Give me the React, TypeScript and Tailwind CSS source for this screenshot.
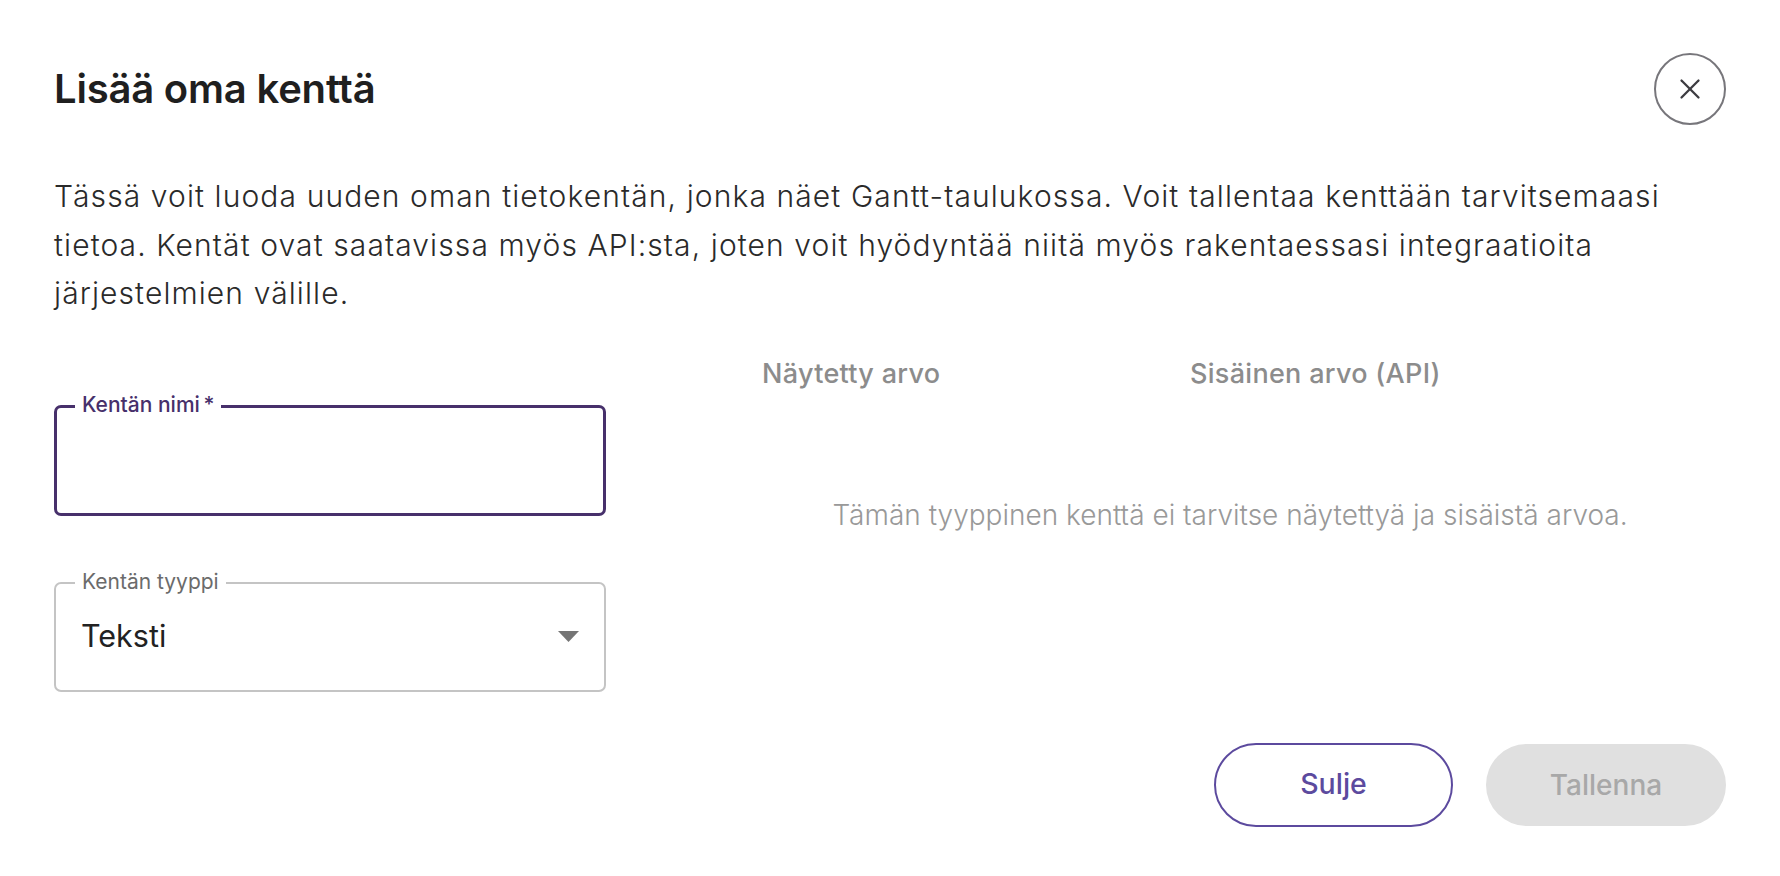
import { X } from "lucide-react";

const FONT = "font-['Inter','Roboto','Liberation_Sans',sans-serif]";

function OutlinedField({
  label,
  focused,
  children,
}: {
  label: string;
  focused?: boolean;
  children?: React.ReactNode;
}) {
  return (
    <div
      className={
        focused
          ? "relative h-[111px] rounded-[7px] border-[3px] border-[#47306b]"
          : "relative h-[110px] rounded-[7px] border-2 border-[#c4c4c4]"
      }
    >
      <span
        className={
          focused
            ? "absolute -top-[16px] left-[18px] bg-white px-[7px] text-[21px] leading-[26px] font-medium text-[#47306b]"
            : "absolute -top-[15px] left-[19px] bg-white px-[7px] text-[21px] leading-[26px] text-[#6b6b6b]"
        }
      >
        {label}
      </span>
      {children}
    </div>
  );
}

export default function App() {
  return (
    <div className={`${FONT} min-h-screen bg-white px-[54px] pt-[53px] text-[#222]`}>
      <div className="flex items-center justify-between">
        <h1 className="text-[40px] font-semibold leading-[48px] tracking-[-0.2px] text-[#1f1f1f]">
          Lisää oma kenttä
        </h1>
        <button className="flex h-[72px] w-[72px] items-center justify-center rounded-full border-2 border-[#77767b] text-[#3c3b40]">
          <X size={34} strokeWidth={1.6} />
        </button>
      </div>

      <p className="mt-[47px] text-[30px] font-light leading-[48.5px] tracking-[1.1px] text-[#2a2a2a]">
        Tässä voit luoda uuden oman tietokentän, jonka näet Gantt-taulukossa. Voit tallentaa kenttään tarvitsemaasi
        tietoa. Kentät ovat saatavissa myös API:sta, joten voit hyödyntää niitä myös rakentaessasi integraatioita
        järjestelmien välille.
      </p>

      <div className="grid grid-cols-[552px_1fr] gap-x-[128px]">
        <div className="pt-[87px]">
          <OutlinedField label={"Kentän nimi\u2009*"} focused />
          <div className="mt-[66px]">
            <OutlinedField label="Kentän tyyppi">
              <div className="flex h-full items-center justify-between pl-[25px] pr-[25px]">
                <span className="text-[30.5px] leading-none text-[#222]">Teksti</span>
                <svg width="21" height="11" viewBox="0 0 21 11">
                  <path d="M0 0 L21 0 L10.5 11 Z" fill="#757575" />
                </svg>
              </div>
            </OutlinedField>
          </div>
        </div>

        <div className="pt-[41px]">
          <div className="flex pl-[28px] text-[27px] font-medium leading-[30px] tracking-[0.3px] text-[#8c8c8c]">
            <span className="w-[428px]">Näytetty arvo</span>
            <span>Sisäinen arvo (API)</span>
          </div>
          <p className="mt-[111px] text-center text-[28px] font-light leading-[30px] text-[#999]">
            Tämän tyyppinen kenttä ei tarvitse näytettyä ja sisäistä arvoa.
          </p>
        </div>
      </div>

      <div className="mt-[51px] flex justify-end gap-[33px]">
        <button className="h-[84px] w-[239px] rounded-full border-2 border-[#5c4a9e] text-[28.5px] font-medium text-[#5c4a9e]">
          Sulje
        </button>
        <button
          disabled
          className="h-[82px] w-[240px] self-center rounded-full bg-[#e0e0e0] text-[28px] font-medium text-[#a8a8a8]"
        >
          Tallenna
        </button>
      </div>
    </div>
  );
}
